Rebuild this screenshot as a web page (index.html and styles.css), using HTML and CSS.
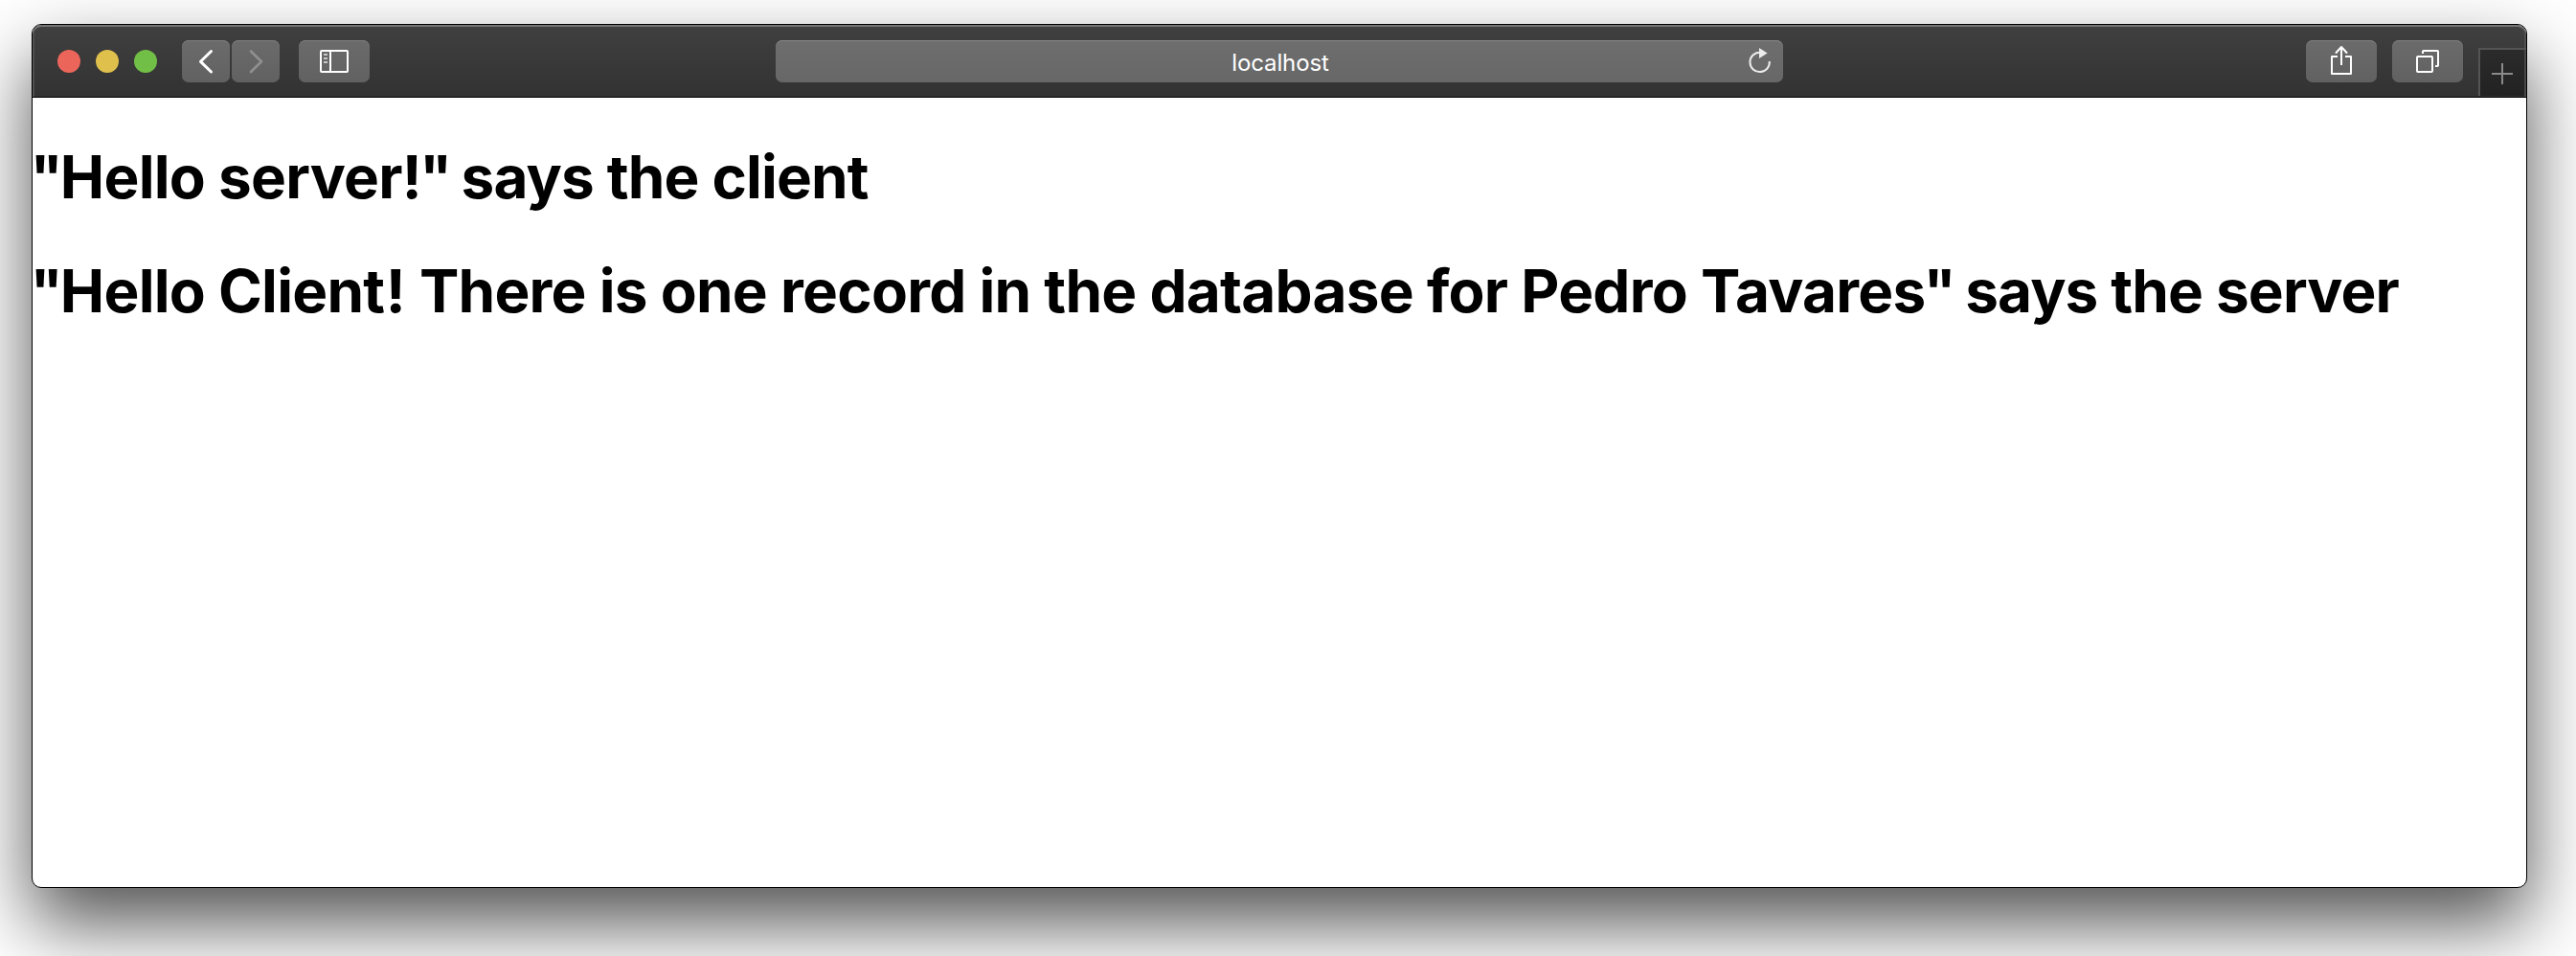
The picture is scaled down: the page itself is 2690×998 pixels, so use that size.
FILE: index.html
```html
<!DOCTYPE html>
<html lang="en">
<head>
<meta charset="utf-8">
<title>localhost</title>
<link rel="stylesheet" href="styles.css">
</head>
<body>
<div class="window">
  <header class="toolbar">
    <div class="lights">
      <span class="light close"></span>
      <span class="light minimize"></span>
      <span class="light maximize"></span>
    </div>
    <div class="history">
      <button class="btn nav" aria-label="Back"><svg width="50" height="44" viewBox="0 0 50 44" fill="none" stroke="#fff" stroke-width="3" stroke-linecap="round" stroke-linejoin="round"><path d="M30.5 11.5L19.5 22.3L30.5 33"/></svg></button>
      <button class="btn nav" aria-label="Forward"><svg width="50" height="44" viewBox="0 0 50 44" fill="none" stroke="#909090" stroke-width="2.6" stroke-linecap="round" stroke-linejoin="round"><path d="M20 11.5L31 22.3L20 33"/></svg></button>
    </div>
    <button class="btn wide" aria-label="Sidebar"><svg width="74" height="44" viewBox="0 0 74 44" fill="none" stroke="#fff" stroke-width="2"><rect x="23" y="11" width="28" height="22" rx="1"/><path d="M33 11V33"/><path stroke="#c8c8c8" d="M26 15H30M26 19H30M26 23H30"/></svg></button>
    <div class="address">
      <span class="host">localhost</span>
      <svg class="reload" width="30" height="44" viewBox="0 0 30 44"><path d="M14.6 12.7A10.2 10.2 0 1 0 24.8 22" fill="none" stroke="#ececec" stroke-width="2"/><path d="M14 8L22.6 13.5L14 19Z" fill="#ececec"/></svg>
    </div>
    <div class="actions">
      <button class="btn wide" aria-label="Share"><svg width="74" height="44" viewBox="0 0 74 44" fill="none" stroke="#fff" stroke-width="2" stroke-linejoin="round"><path d="M33 17H27V35H47V17H41M37 26V7.5"/><path d="M31.5 13L37 7L42.5 13" stroke-linecap="round"/></svg></button>
      <button class="btn wide" aria-label="Tabs"><svg width="74" height="44" viewBox="0 0 74 44" fill="none" stroke="#fff" stroke-width="2"><rect x="26" y="17" width="16" height="16" rx="1"/><path d="M32 14V11.8Q32 11 32.8 11H47.2Q48 11 48 11.8V26.2Q48 27 47.2 27H45"/></svg></button>
    </div>
    <button class="newtab" aria-label="New tab"><svg width="48" height="48" viewBox="0 0 48 48" stroke="#8a8a8a" stroke-width="2"><path d="M12 25H34M23 14V36"/></svg></button>
  </header>
  <main class="page">
    <h1 class="line"><span class="open">"</span><span class="quote">Hello server!</span><span class="end">"</span> says the client</h1>
    <h1 class="line"><span class="open">"</span><span class="quote">Hello Client<span class="bang">!</span> There is one record in the database for Pedro Tavares</span><span class="end">"</span> says the server</h1>
  </main>
</div>
</body>
</html>
```
FILE: styles.css
```css
* { box-sizing: border-box; }
body {
  margin: 0;
  height: 998px;
  padding: 25px 51px 71px 33px;
  overflow: hidden;
  background: #fff;
  font-family: Inter, "Liberation Sans", sans-serif;
}
.window {
  width: 2606px;
  height: 902px;
  border: 1px solid #000;
  border-radius: 10px;
  overflow: hidden;
  background: #fff;
  box-shadow: 0 37px 78px rgba(0, 0, 0, .68);
}
.toolbar {
  display: flex;
  align-items: flex-start;
  height: 76px;
  padding: 16px 0 0 26px;
  border-bottom: 1px solid #000;
  border-radius: 9px 9px 0 0;
  background: linear-gradient(#404040, #323232);
  box-shadow: inset 0 2px 0 #747474, inset 2px 0 0 #505050, inset -2px 0 0 #505050;
}
.lights {
  display: flex;
  gap: 16px;
  padding-top: 10px;
}
.light {
  width: 24px;
  height: 24px;
  border-radius: 50%;
}
.close { background: #ec655a; }
.minimize { background: #e0c04c; }
.maximize { background: #71bf46; }
.history {
  display: flex;
  gap: 2px;
  margin: 0 20px 0 26px;
}
.btn {
  display: block;
  height: 44px;
  padding: 0;
  border: 0;
  border-radius: 7px;
  background: linear-gradient(#6b6b6b, #616161);
  box-shadow: inset 0 1px 0 #808080;
}
.btn svg, .newtab svg { display: block; }
.nav { width: 50px; }
.wide { width: 74px; }
.address {
  display: flex;
  align-items: center;
  width: 1052px;
  height: 44px;
  margin-left: 424px;
  padding-right: 9px;
  border-radius: 7px;
  background: linear-gradient(#6e6e6e, #676767);
  box-shadow: inset 0 1px 0 #8a8a8a;
}
.host {
  flex: 1;
  padding: 3px 0 0 41px;
  text-align: center;
  color: #fff;
  font-size: 24px;
  line-height: 44px;
  letter-spacing: -.1px;
}
.actions {
  display: flex;
  gap: 16px;
  margin-left: 546px;
}
.newtab {
  width: 50px;
  height: 50px;
  margin: 8px 0 0 16px;
  padding: 0;
  border: 0;
  border-top: 2px solid #545454;
  border-left: 2px solid #545454;
  background: linear-gradient(#2b2b2b, #222);
  box-shadow: inset -2px 0 0 #484848;
}
.page { padding-top: 43px; }
.line {
  margin: 0;
  height: 119px;
  font-size: 62px;
  line-height: 80px;
  font-weight: 700;
  letter-spacing: -.85px;
  color: #000;
  white-space: nowrap;
}
.quote { letter-spacing: -.74px; }
.bang { margin: 0 1px 0 1.5px; }
.open { margin: 0 -2px 0 -2.5px; }
.end { margin: 0 -3.5px 0 -2px; }
```
